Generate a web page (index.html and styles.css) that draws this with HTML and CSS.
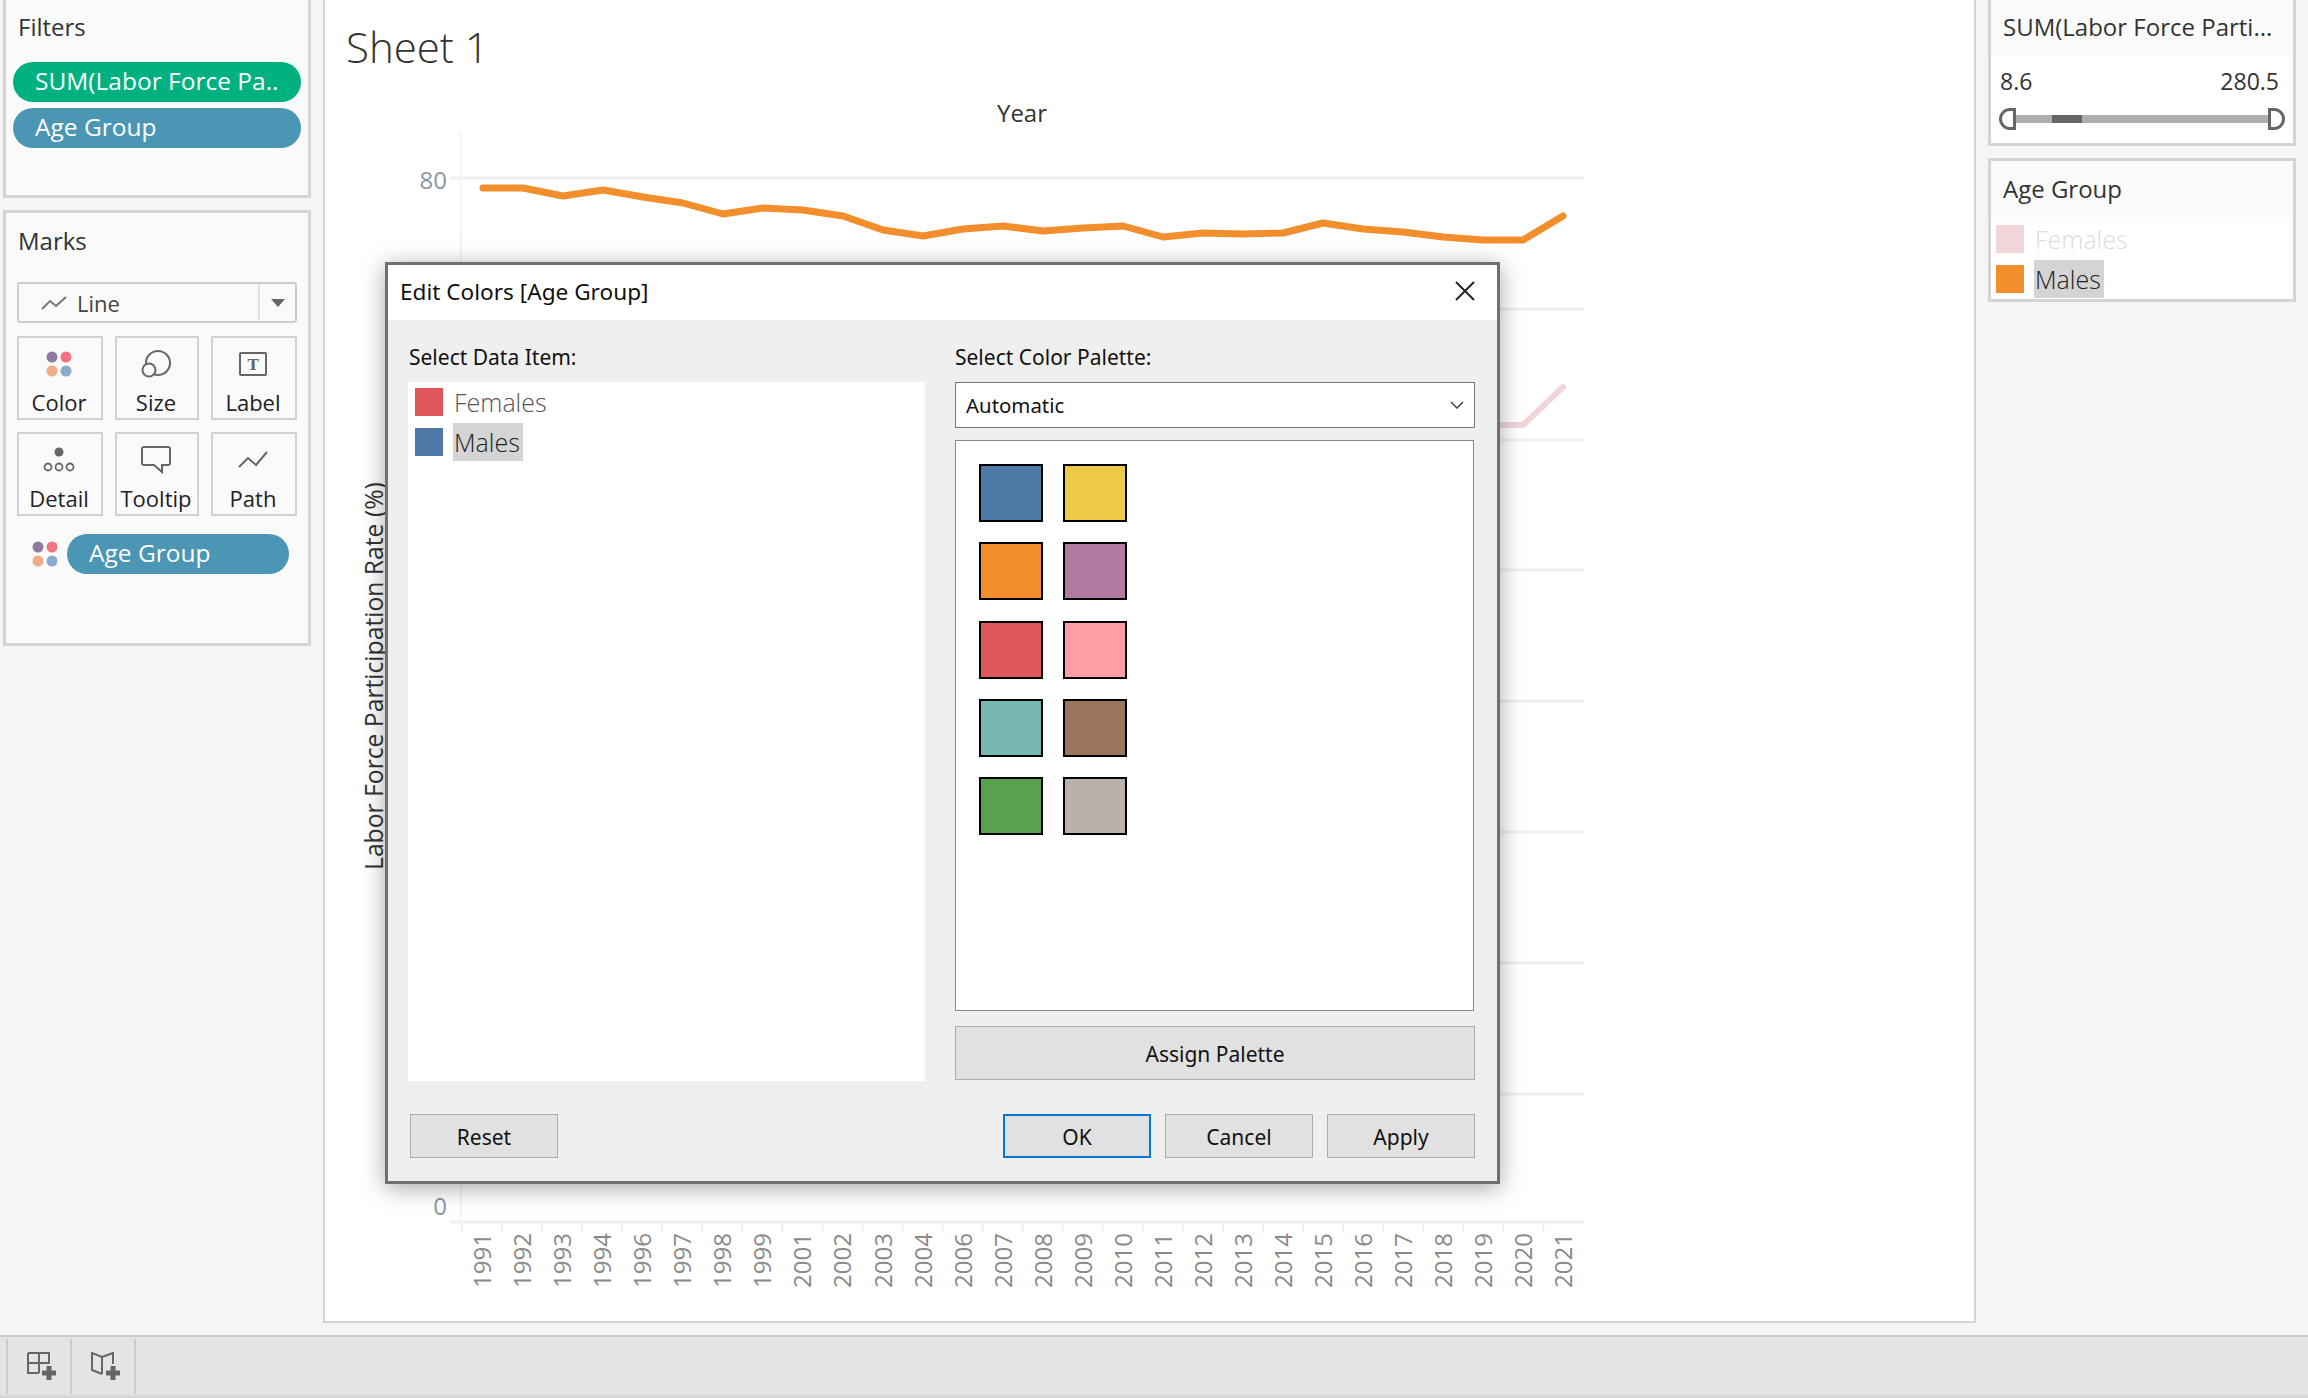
FILE: index.html
```html
<!DOCTYPE html>
<html lang="en">
<head>
    <meta charset="UTF-8">
    <meta name="viewport" content="width=device-width, initial-scale=1.0">
    <title>Sheet 1</title>
    <link rel="stylesheet" href="styles.css">
</head>
<body>

<div class="app">
    <div class="main">

        <!-- Left shelves -->
        <div class="side-left">
            <div class="card filters">
                <div class="card-title">Filters</div>
                <div class="pill pill-green">SUM(Labor Force Pa..</div>
                <div class="pill pill-blue">Age Group</div>
            </div>

            <div class="card marks">
                <div class="card-title">Marks</div>
                <div class="mark-select">
                    <svg class="mark-line" width="26" height="16" viewBox="0 0 26 16"><path d="M1 14 L9 6 L15 11 L25 2" fill="none" stroke="#777" stroke-width="2"/></svg>
                    <span class="mark-select-text">Line</span>
                    <span class="mark-select-arrow"></span>
                </div>
                <div class="mark-grid">
                    <div class="mark-btn">
                        <span class="mark-icon"><svg width="26" height="26" viewBox="0 0 26 26"><circle cx="6" cy="6" r="5.5" fill="#8f7a9f"/><circle cx="20" cy="6" r="5.5" fill="#f3727f"/><circle cx="6" cy="20" r="5.5" fill="#f0ad85"/><circle cx="20" cy="20" r="5.5" fill="#8aabcf"/></svg></span>
                        <span>Color</span>
                    </div>
                    <div class="mark-btn">
                        <span class="mark-icon"><svg width="30" height="28" viewBox="0 0 30 28"><circle cx="17" cy="13" r="12" fill="none" stroke="#666" stroke-width="2"/><circle cx="8" cy="20" r="6.5" fill="#fafafa" stroke="#666" stroke-width="2"/></svg></span>
                        <span>Size</span>
                    </div>
                    <div class="mark-btn">
                        <span class="mark-icon"><svg width="28" height="25" viewBox="0 0 28 25"><rect x="1" y="1" width="26" height="22" rx="1" fill="none" stroke="#666" stroke-width="2"/><text x="14" y="18" text-anchor="middle" class="label-t">T</text></svg></span>
                        <span>Label</span>
                    </div>
                    <div class="mark-btn">
                        <span class="mark-icon"><svg width="32" height="26" viewBox="0 0 32 26"><circle cx="16" cy="5" r="4.5" fill="#666"/><circle cx="5" cy="20" r="3.5" fill="none" stroke="#666" stroke-width="1.8"/><circle cx="16" cy="20" r="3.5" fill="none" stroke="#666" stroke-width="1.8"/><circle cx="27" cy="20" r="3.5" fill="none" stroke="#666" stroke-width="1.8"/></svg></span>
                        <span>Detail</span>
                    </div>
                    <div class="mark-btn">
                        <span class="mark-icon"><svg width="30" height="28" viewBox="0 0 30 28"><path d="M3 1 H27 Q29 1 29 3 V17 Q29 19 27 19 H21 V26 L13 19 H3 Q1 19 1 17 V3 Q1 1 3 1 Z" fill="none" stroke="#666" stroke-width="2"/></svg></span>
                        <span>Tooltip</span>
                    </div>
                    <div class="mark-btn">
                        <span class="mark-icon"><svg width="30" height="20" viewBox="0 0 30 20"><path d="M1 17 L10 8 L18 15 L29 2" fill="none" stroke="#666" stroke-width="2"/></svg></span>
                        <span>Path</span>
                    </div>
                </div>
                <div class="mark-field">
                    <svg width="26" height="26" viewBox="0 0 26 26"><circle cx="6" cy="6" r="5.5" fill="#8f7a9f"/><circle cx="20" cy="6" r="5.5" fill="#f3727f"/><circle cx="6" cy="20" r="5.5" fill="#f0ad85"/><circle cx="20" cy="20" r="5.5" fill="#8aabcf"/></svg>
                    <div class="pill pill-blue pill-field">Age Group</div>
                </div>
            </div>
        </div>

        <!-- Worksheet -->
        <div class="sheet">
            <h1 class="sheet-title">Sheet 1</h1>
            <svg class="chart" width="1649" height="1243" viewBox="325 80 1649 1243">
                <text x="1022" y="122" text-anchor="middle" class="axis-title">Year</text>
                <text transform="translate(383 870) rotate(-90)" class="axis-title axis-title-y">Labor Force Participation Rate (%)</text>

                <g id="grid" stroke="#f0f0f0" stroke-width="3">
                    <line x1="451" y1="178" x2="1584" y2="178"/>
                    <line x1="451" y1="309" x2="1584" y2="309"/>
                    <line x1="451" y1="440" x2="1584" y2="440"/>
                    <line x1="451" y1="570" x2="1584" y2="570"/>
                    <line x1="451" y1="701" x2="1584" y2="701"/>
                    <line x1="451" y1="832" x2="1584" y2="832"/>
                    <line x1="451" y1="963" x2="1584" y2="963"/>
                    <line x1="451" y1="1094" x2="1584" y2="1094"/>
                    <line x1="451" y1="1222" x2="1584" y2="1222"/>
                </g>
                <line x1="461" y1="132" x2="461" y2="1222" stroke="#f5f5f5" stroke-width="2"/>
                <g id="ticks" stroke="#f0f0f0" stroke-width="2"></g>

                <text x="447" y="189" text-anchor="end" class="axis-num">80</text>
                <text x="447" y="1215" text-anchor="end" class="axis-num">0</text>
                <g id="years"></g>

                <polyline id="lineMales" fill="none" stroke="#f28e2b" stroke-width="7" stroke-linejoin="round" stroke-linecap="round"/>
                <polyline points="1483,425 1523,425 1563,387" fill="none" stroke="#f0d6d9" stroke-width="6" stroke-linejoin="round" stroke-linecap="round"/>
            </svg>
        </div>

        <!-- Legends -->
        <div class="side-right">
            <div class="legend">
                <div class="legend-head legend-head-top">SUM(Labor Force Parti...</div>
                <div class="range-values"><span>8.6</span><span>280.5</span></div>
                <div class="range">
                    <span class="range-grip range-grip-l"></span>
                    <span class="range-track"><span class="range-fill"></span></span>
                    <span class="range-grip range-grip-r"></span>
                </div>
            </div>
            <div class="legend">
                <div class="legend-head">Age Group</div>
                <div class="legend-rows">
                    <div class="item-row"><span class="swatch swatch-fade"></span><span class="item-text item-muted">Females</span></div>
                    <div class="item-row"><span class="swatch swatch-orange"></span><span class="item-text item-selected">Males</span></div>
                </div>
            </div>
        </div>
    </div>

    <!-- Sheet tabs -->
    <div class="tabs">
        <div class="tab-btn">
            <svg width="30" height="30" viewBox="0 0 30 30"><path d="M1 1 H22 V12 M1 1 V21 H12 M12 1 V21 M1 11 H22" fill="none" stroke="#666" stroke-width="2"/><path d="M15 21 H29 M22 14 V28" stroke="#666" stroke-width="5"/></svg>
        </div>
        <div class="tab-btn">
            <svg width="30" height="30" viewBox="0 0 30 30"><path d="M11 22 L1 18 V1 L11 5 L22 1 V12 M11 5 V22" fill="none" stroke="#666" stroke-width="2"/><path d="M15 21 H29 M22 14 V28" stroke="#666" stroke-width="5"/></svg>
        </div>
    </div>
    <div class="tabs-foot"></div>

    <!-- Edit colors dialog -->
    <div class="dialog">
        <div class="dialog-head">
            <span>Edit Colors [Age Group]</span>
            <svg width="20" height="20" viewBox="0 0 20 20"><path d="M1 1 L19 19 M19 1 L1 19" stroke="#222" stroke-width="2"/></svg>
        </div>
        <div class="dialog-body">
            <div class="dialog-cols">
                <div class="col-items">
                    <div class="col-label col-label-items">Select Data Item:</div>
                    <div class="data-list">
                        <div class="item-row"><span class="swatch swatch-red"></span><span class="item-text item-grey">Females</span></div>
                        <div class="item-row"><span class="swatch swatch-blue"></span><span class="item-text item-selected">Males</span></div>
                    </div>
                </div>
                <div class="col-palette">
                    <div class="col-label">Select Color Palette:</div>
                    <div class="palette-select">
                        <span>Automatic</span>
                        <svg width="14" height="8" viewBox="0 0 14 8"><path d="M1 1 L7 7 L13 1" fill="none" stroke="#444" stroke-width="1.5"/></svg>
                    </div>
                    <div class="palette-box">
                        <div class="palette-grid" id="palette"></div>
                    </div>
                    <button class="btn btn-assign">Assign Palette</button>
                </div>
            </div>
            <div class="dialog-foot">
                <button class="btn">Reset</button>
                <div class="foot-right">
                    <button class="btn btn-ok">OK</button>
                    <button class="btn">Cancel</button>
                    <button class="btn">Apply</button>
                </div>
            </div>
        </div>
    </div>
</div>

<script>
    const svgNs = 'http://www.w3.org/2000/svg';
    const years = [1991, 1992, 1993, 1994, 1996, 1997, 1998, 1999, 2001, 2002, 2003, 2004, 2006, 2007,
        2008, 2009, 2010, 2011, 2012, 2013, 2014, 2015, 2016, 2017, 2018, 2019, 2020, 2021];
    const males = [188, 188, 196, 190, 197, 203, 214, 208, 210, 216, 230, 236, 229, 226, 231, 228, 226, 237,
        233, 234, 233, 223, 229, 232, 237, 240, 240, 216];

    document.getElementById('lineMales').setAttribute('points', males.map((y, i) => `${483 + i * 40},${y}`).join(' '));

    years.forEach((year, i) => {
        const x = 482 + i * 40.05;
        const label = document.createElementNS(svgNs, 'text');
        label.setAttribute('transform', `translate(${x + 9} 1288) rotate(-90)`);
        label.setAttribute('class', 'axis-year');
        label.textContent = year;
        document.getElementById('years').appendChild(label);

        const tick = document.createElementNS(svgNs, 'line');
        tick.setAttribute('x1', x - 20);
        tick.setAttribute('x2', x - 20);
        tick.setAttribute('y1', 1224);
        tick.setAttribute('y2', 1232);
        document.getElementById('ticks').appendChild(tick);
    });

    const colors = ['#4e79a7', '#edc948', '#f28e2b', '#b07aa1', '#e15759', '#ff9da7', '#76b7b2', '#9c755f', '#59a14f', '#bab0ac'];
    colors.forEach(color => {
        const chip = document.createElement('span');
        chip.className = 'palette-chip';
        chip.style.backgroundColor = color;
        document.getElementById('palette').appendChild(chip);
    });
</script>

</body>
</html>
```

FILE: styles.css
```css
* {
    box-sizing: border-box;
}

body {
    margin: 0;
    font-family: 'Open Sans', 'Noto Sans', sans-serif;
    background-color: #f5f5f5;
    color: #333;
    overflow: hidden;
}

.app {
    position: relative;
    width: 2308px;
    height: 1398px;
    display: flex;
    flex-direction: column;
}

.main {
    display: flex;
    height: 1335px;
}

/* Left shelves */
.side-left {
    width: 323px;
    padding-left: 3px;
    flex-shrink: 0;
}

.card {
    width: 308px;
    border: 3px solid #d4d4d4;
    background-color: #fafafa;
    padding: 0 7px;
}

.card-title {
    font-size: 24px;
    line-height: 30px;
    color: #333;
    padding-left: 5px;
}

.filters {
    height: 198px;
    border-top: none;
    padding-top: 12px;
}

.filters .card-title {
    margin-bottom: 20px;
}

.marks {
    margin-top: 12px;
    height: 436px;
    padding: 13px 11px 0;
}

.marks .card-title {
    padding-left: 1px;
    margin-bottom: 26px;
}

.pill {
    height: 40px;
    line-height: 38px;
    border-radius: 20px;
    color: #fff;
    font-size: 24.5px;
    padding-left: 22px;
    margin: 0 0 6px 0;
    width: 288px;
    white-space: nowrap;
}

.pill-green {
    background-color: #00b180;
}

.pill-blue {
    background-color: #4b96b4;
}

.mark-select {
    display: flex;
    align-items: center;
    height: 41px;
    width: 280px;
    border: 2px solid #ccc;
    border-radius: 3px;
    padding-left: 22px;
    font-size: 22px;
    color: #444;
}

.mark-line {
    margin-right: 10px;
}

.mark-select-text {
    flex: 1;
}

.mark-select-arrow {
    position: relative;
    width: 37px;
    height: 37px;
    border-left: 2px solid #e2e2e2;
    display: flex;
    align-items: center;
    justify-content: center;
}

.mark-select-arrow::after {
    content: "";
    border-left: 7px solid transparent;
    border-right: 7px solid transparent;
    border-top: 8px solid #666;
}

.mark-grid {
    display: grid;
    grid-template-columns: 86px 84px 86px;
    grid-auto-rows: 84px;
    column-gap: 12px;
    row-gap: 12px;
    margin-top: 13px;
    width: 280px;
}

.mark-btn {
    border: 2px solid #d2d2d2;
    display: flex;
    flex-direction: column;
    align-items: center;
    justify-content: space-between;
    font-size: 22px;
    line-height: 30px;
    color: #222;
    padding: 11px 2px 1px 0;
}

.mark-icon {
    display: flex;
    align-items: center;
    height: 30px;
}

.label-t {
    font-family: 'DejaVu Serif', serif;
    font-size: 15px;
    font-weight: bold;
    fill: #666;
}

.mark-field {
    display: flex;
    align-items: center;
    gap: 9px;
    margin-top: 18px;
    padding-left: 15px;
}

.pill-field {
    width: 222px;
    margin: 0;
}

/* Worksheet */
.sheet {
    width: 1653px;
    height: 1323px;
    flex-shrink: 0;
    border: 2px solid #d4d4d4;
    border-top: none;
    background-color: #fff;
}

.sheet-title {
    margin: 0;
    height: 80px;
    padding: 22px 0 0 21px;
    font-size: 42px;
    line-height: 50px;
    font-weight: 300;
    color: #333;
}

.chart {
    display: block;
}

.axis-title {
    font-size: 24px;
    fill: #333;
}

.axis-title-y {
    font-size: 24.7px;
}

.axis-num {
    font-size: 24px;
    fill: #8a97a3;
}

.axis-year {
    font-size: 24px;
    fill: #8a8a8a;
}

/* Legends */
.side-right {
    width: 332px;
    padding-left: 12px;
    flex-shrink: 0;
}

.legend {
    width: 308px;
    border: 3px solid #d4d4d4;
    background-color: #fff;
    margin-bottom: 12px;
}

.side-right .legend:first-child {
    border-top: none;
    height: 146px;
}

.legend-head {
    height: 56px;
    line-height: 56px;
    padding-left: 12px;
    background-color: #fafafa;
    font-size: 24px;
    white-space: nowrap;
}

.legend-head-top {
    line-height: 54px;
}

.range-values {
    display: flex;
    justify-content: space-between;
    padding: 8px 14px 0 9px;
    font-size: 23px;
    line-height: 34px;
}

.range {
    display: flex;
    align-items: center;
    height: 24px;
    margin: 9px 0 0 8px;
}

.range-grip {
    width: 17px;
    height: 22px;
    border: 3px solid #666;
    flex-shrink: 0;
}

.range-grip-l {
    border-radius: 11px 0 0 11px;
}

.range-grip-r {
    border-radius: 0 11px 11px 0;
}

.range-track {
    display: block;
    width: 252px;
    height: 8px;
    background-color: #afafaf;
}

.range-fill {
    display: block;
    width: 30px;
    height: 8px;
    margin-left: 36px;
    background-color: #666;
}

.legend-rows {
    padding: 2px 0 0 5px;
}

.item-row {
    display: flex;
    align-items: center;
    height: 40px;
}

.swatch {
    width: 28px;
    height: 28px;
    flex-shrink: 0;
    margin-right: 10px;
}

.swatch-fade {
    background-color: #f1d5d8;
}

.swatch-orange {
    background-color: #f28e2b;
}

.swatch-red {
    background-color: #e15759;
}

.swatch-blue {
    background-color: #4e79a7;
}

.item-text {
    font-size: 25px;
    line-height: 38px;
    padding: 0 3px 0 1px;
    font-weight: 300;
}

.item-muted {
    color: #ddd;
}

.item-grey {
    color: #555;
}

.item-selected {
    background-color: #d4d4d4;
    color: #222;
}

/* Sheet tabs */
.tabs {
    display: flex;
    height: 60px;
    padding: 2px 0 1px 6px;
    background-color: #e4e4e4;
    border-top: 2px solid #ccc;
}

.tab-btn {
    width: 64px;
    border-left: 2px solid #ccc;
    padding-left: 6px;
    display: flex;
    align-items: center;
    justify-content: center;
}

.tab-btn:last-child {
    width: 66px;
    border-right: 2px solid #ccc;
}

.tabs-foot {
    height: 3px;
    background-color: #d8d8d8;
}

/* Edit colors dialog */
.dialog {
    position: absolute;
    left: 385px;
    top: 262px;
    width: 1115px;
    height: 922px;
    border: 3px solid #707070;
    background-color: #efefef;
    box-shadow: 0 4px 22px rgba(0, 0, 0, 0.35);
    font-family: 'Noto Sans', 'Open Sans', sans-serif;
    font-size: 21px;
    color: #111;
}

.dialog-head {
    display: flex;
    justify-content: space-between;
    align-items: center;
    height: 55px;
    padding: 0 22px 3px 12px;
    background-color: #fff;
    font-size: 22.6px;
}

.dialog-body {
    padding: 0 22px 0 20px;
}

.dialog-cols {
    display: flex;
    gap: 30px;
}

.col-items {
    width: 518px;
}

.col-palette {
    width: 520px;
}

.col-label {
    height: 62px;
    line-height: 28px;
    padding-top: 23px;
}

.col-label-items {
    padding-left: 1px;
}

.data-list {
    height: 699px;
    background-color: #fff;
    padding: 0 0 0 7px;
    font-family: 'Open Sans', sans-serif;
}

.palette-select {
    display: flex;
    justify-content: space-between;
    align-items: center;
    height: 46px;
    border: 1px solid #7a7a7a;
    background-color: #fff;
    padding: 0 10px;
    font-size: 20.4px;
}

.palette-box {
    margin-top: 12px;
    height: 571px;
    width: 519px;
    border: 1px solid #868b92;
    background-color: #fff;
    padding: 23px 0 0 23px;
}

.palette-grid {
    display: grid;
    grid-template-columns: 64px 64px;
    grid-auto-rows: 58px;
    column-gap: 20px;
    row-gap: 20.25px;
}

.palette-chip {
    border: 2px solid #000;
}

.btn {
    display: block;
    width: 148px;
    height: 44px;
    padding: 2px 0 0;
    border: 1px solid #adadad;
    background-color: #e1e1e1;
    font-family: inherit;
    font-size: 21px;
    color: #111;
}

.btn-assign {
    width: 520px;
    height: 54px;
    margin-top: 15px;
}

.btn-ok {
    border: 2px solid #0078d7;
}

.dialog-foot {
    display: flex;
    justify-content: space-between;
    margin-top: 33px;
    padding-left: 2px;
}

.foot-right {
    display: flex;
    gap: 14px;
}
```
